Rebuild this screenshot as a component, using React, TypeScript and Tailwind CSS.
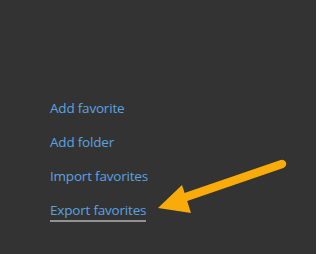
import React from "react";

export default function App() {
  const items = ["Add favorite", "Add folder", "Import favorites", "Export favorites"];
  return (
    <div className="relative w-[316px] h-[254px] bg-[#333333] overflow-hidden" style={{ fontFamily: '"Open Sans", "Noto Sans", sans-serif' }}>
      <div className="flex flex-col gap-[14px] pl-[50px] pt-[98px]">
        {items.map((t, i) => (
          <div key={t} className="flex">
            <span
              className={
                "text-[13.5px] leading-[20px] tracking-[-0.2px] text-[#5aa3e0] " +
                (i === 3 ? "border-b-2 border-[#929292]" : "")
              }
            >
              {t}
            </span>
          </div>
        ))}
      </div>
      <svg className="absolute left-0 top-0" width="316" height="254" viewBox="0 0 316 254">
        <line x1="282" y1="164" x2="180" y2="199" stroke="#f9ab0a" strokeWidth="8.5" strokeLinecap="round" />
        <polygon points="158,208 182,185 191,213" fill="#f9ab0a" />
      </svg>
    </div>
  );
}
